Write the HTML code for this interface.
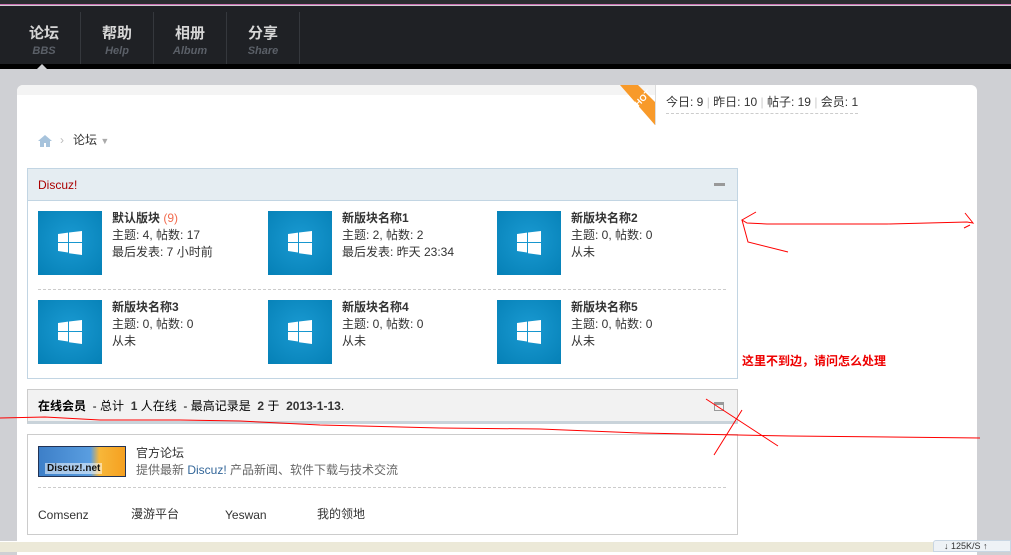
<!DOCTYPE html>
<html><head><meta charset="utf-8"><style>
*{margin:0;padding:0;box-sizing:border-box}
body{width:1011px;height:552px;overflow:hidden;background:#cfd0d4;font-family:"Liberation Sans","Noto Sans CJK SC",sans-serif;font-size:12px;color:#333;position:relative}
.abs{position:absolute}
#top{left:0;top:0;width:1011px;height:5px;background:#2a2c30;border-bottom:1px solid #c86fb0}
#nav{left:0;top:6px;width:1011px;height:58px;background:#1f2125}
#navb{left:0;top:64px;width:1011px;height:5px;background:#000}
.ni{position:absolute;top:6px;width:73px;text-align:center;border-right:1px solid #35383d;height:52px}
.ni b{display:block;color:#d6d6d6;font-size:15px;margin-top:12px;line-height:20px}
.ni i{display:block;color:#5b6068;font-size:11px;font-weight:bold;line-height:14px}
#panel{left:17px;top:85px;width:960px;height:470px;background:#fff;border-radius:6px 6px 0 0}
#strip{left:17px;top:85px;width:638px;height:10px;background:#f4f4f4;border-radius:6px 0 0 0}
.box{position:absolute;border:1px solid #c2d5e3}
.ic{position:absolute;width:64px;height:64px;background:radial-gradient(circle at 50% 45%,#1a9ad2,#0580b6)}
.ic svg{position:absolute;left:20px;top:20px}
.t{position:absolute;line-height:17px;font-size:12px;color:#333}
.t b{color:#333}
.n{color:#333}
</style></head><body>
<div id="top" class="abs"></div>
<div id="nav" class="abs">
 <div class="ni" style="left:8px"><b>论坛</b><i>BBS</i></div>
 <div class="ni" style="left:81px"><b>帮助</b><i>Help</i></div>
 <div class="ni" style="left:154px"><b>相册</b><i>Album</i></div>
 <div class="ni" style="left:227px"><b>分享</b><i>Share</i></div>
</div>
<div id="navb" class="abs"></div>
<div class="abs" style="left:37px;top:64px;width:0;height:0;border:5px solid transparent;border-bottom-color:#d0d1d5;border-top:0"></div>
<div id="panel" class="abs"></div>
<div id="strip" class="abs"></div>
<div class="abs" style="left:655px;top:85px;width:1px;height:40px;background:#ddd"></div>
<svg class="abs" style="left:610px;top:85px" width="45" height="40"><polygon points="10,0 28,0 45,17 45,40" fill="#f89a2a"/><text x="24" y="18" fill="#fff" font-size="9" font-weight="bold" transform="rotate(-45 31 15)" font-family="Liberation Sans">HOT</text></svg>
<div class="t" style="left:666px;top:94px;border-bottom:1px dashed #ccc;padding-bottom:2px">今日: 9 <span style="color:#ccc">|</span> 昨日: 10 <span style="color:#ccc">|</span> 帖子: 19 <span style="color:#ccc">|</span> 会员: 1</div>
<svg class="abs" style="left:37px;top:134px" width="16" height="14"><path d="M8 1L1 7h2v6h4V9h2v4h4V7h2z" fill="#a7c3dc"/></svg>
<div class="t" style="left:60px;top:132px;color:#bbb">›</div>
<div class="t" style="left:73px;top:132px">论坛 <span style="color:#aaa;font-size:9px">▼</span></div>

<div class="box" style="left:27px;top:168px;width:711px;height:211px"></div>
<div class="abs" style="left:28px;top:169px;width:709px;height:32px;background:#e5edf2;border-bottom:1px solid #c2d5e3"></div>
<div class="t" style="left:38px;top:177px;color:#a00;">Discuz!</div>
<div class="abs" style="left:714px;top:183px;width:11px;height:3px;background:#999"></div>
<div class="abs" style="left:38px;top:289px;width:688px;border-top:1px dashed #ccc"></div>

<div class="ic" style="left:38px;top:211px"><svg width="24" height="24"><path d="M0 3l10-1.4V11H0zM11 1.5L24 0v11H11zM0 12h10v9.5L0 20zM11 12h13v12l-13-1.8z" fill="#fff"/></svg></div>
<div class="ic" style="left:268px;top:211px"><svg width="24" height="24"><path d="M0 3l10-1.4V11H0zM11 1.5L24 0v11H11zM0 12h10v9.5L0 20zM11 12h13v12l-13-1.8z" fill="#fff"/></svg></div>
<div class="ic" style="left:497px;top:211px"><svg width="24" height="24"><path d="M0 3l10-1.4V11H0zM11 1.5L24 0v11H11zM0 12h10v9.5L0 20zM11 12h13v12l-13-1.8z" fill="#fff"/></svg></div>
<div class="ic" style="left:38px;top:300px"><svg width="24" height="24"><path d="M0 3l10-1.4V11H0zM11 1.5L24 0v11H11zM0 12h10v9.5L0 20zM11 12h13v12l-13-1.8z" fill="#fff"/></svg></div>
<div class="ic" style="left:268px;top:300px"><svg width="24" height="24"><path d="M0 3l10-1.4V11H0zM11 1.5L24 0v11H11zM0 12h10v9.5L0 20zM11 12h13v12l-13-1.8z" fill="#fff"/></svg></div>
<div class="ic" style="left:497px;top:300px"><svg width="24" height="24"><path d="M0 3l10-1.4V11H0zM11 1.5L24 0v11H11zM0 12h10v9.5L0 20zM11 12h13v12l-13-1.8z" fill="#fff"/></svg></div>

<div class="t" style="left:112px;top:210px"><b>默认版块</b> <span style="color:#f26c4f">(9)</span><br>主题: <span class="n">4</span>, 帖数: <span class="n">17</span><br>最后发表: <span class="n">7</span> 小时前</div>
<div class="t" style="left:342px;top:210px"><b>新版块名称1</b><br>主题: <span class="n">2</span>, 帖数: <span class="n">2</span><br>最后发表: 昨天 23:34</div>
<div class="t" style="left:571px;top:210px"><b>新版块名称2</b><br>主题: <span class="n">0</span>, 帖数: <span class="n">0</span><br>从未</div>
<div class="t" style="left:112px;top:299px"><b>新版块名称3</b><br>主题: <span class="n">0</span>, 帖数: <span class="n">0</span><br>从未</div>
<div class="t" style="left:342px;top:299px"><b>新版块名称4</b><br>主题: <span class="n">0</span>, 帖数: <span class="n">0</span><br>从未</div>
<div class="t" style="left:571px;top:299px"><b>新版块名称5</b><br>主题: <span class="n">0</span>, 帖数: <span class="n">0</span><br>从未</div>

<div class="abs" style="left:27px;top:389px;width:711px;height:35px;background:#f2f2f2;border:1px solid #ccc;border-bottom:3px solid #c9d3da"></div>
<div class="t" style="left:38px;top:398px;color:#000"><b style="color:#000">在线会员</b> &nbsp;- 总计 &nbsp;<b>1</b> 人在线 &nbsp;- 最高记录是 &nbsp;<b>2</b> 于 &nbsp;<b>2013-1-13</b>.</div>
<div class="abs" style="left:714px;top:402px;width:10px;height:9px;border:1px solid #999;border-top:3px solid #999"></div>

<div class="abs" style="left:27px;top:434px;width:711px;height:101px;border:1px solid #ccc"></div>
<div class="abs" style="left:38px;top:446px;width:88px;height:31px;border:1px solid #235;background:linear-gradient(90deg,#3d7fc8,#5a9ee0 60%,#f7b73a 70%,#f5a020)"></div>
<div class="abs" style="left:45px;top:463px;color:#111;font-weight:bold;font-size:10px;background:#fff8;padding:0 2px">Discuz!.net</div>
<div class="t" style="left:136px;top:445px">官方论坛<br><span style="color:#666">提供最新 <span style="color:#369">Discuz!</span> 产品新闻、软件下载与技术交流</span></div>
<div class="abs" style="left:38px;top:487px;width:688px;border-top:1px dashed #ccc"></div>
<div class="t" style="left:38px;top:507px">Comsenz</div>
<div class="t" style="left:131px;top:506px">漫游平台</div>
<div class="t" style="left:225px;top:507px">Yeswan</div>
<div class="t" style="left:317px;top:506px">我的领地</div>

<div class="abs" style="left:0;top:541px;width:1011px;height:11px;background:#ece9d8;border-top:1px solid #fff"></div>
<div class="abs" style="left:933px;top:540px;width:78px;height:12px;background:#eef2f6;border:1px solid #c9d6e3;border-radius:3px 0 0 0;font-size:9px;color:#333;padding-left:10px">↓ 125K/S ↑</div>

<div class="t" style="left:742px;top:353px;color:#e00;font-weight:bold;font-size:12px">这里不到边，请问怎么处理</div>
<svg class="abs" style="left:0;top:0" width="1011" height="552">
<g stroke="#f00" stroke-width="1" fill="none">
<path d="M756 212L742 220l5 3 20 1 120 0 80-2 6 1 -8-10M970 225l-6 3M742 220l6 22 40 10"/>
<path d="M0 418l45-1 55 3 80 0 60 1 80 4 120 3 100 1 100 4 150 3 190 2"/>
<path d="M706 399l72 47M742 410l-28 45"/>
</g></svg>
</body></html>
